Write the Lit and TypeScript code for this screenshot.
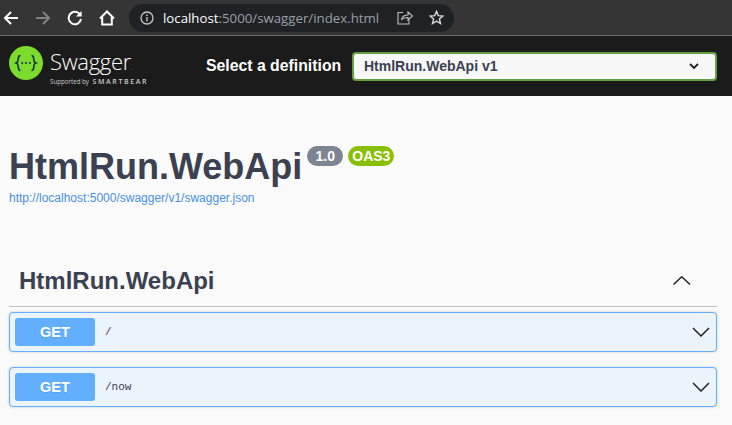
import { LitElement, html, css, svg } from "lit";
import { customElement } from "lit/decorators.js";

const chevronDown = svg`<path d="M1 1 L9 9 L17 1" fill="none" stroke="#222" stroke-width="1.5"/>`;

@customElement("app-root")
export class AppRoot extends LitElement {
  static styles = css`
    :host { display: block; width: 732px; height: 425px; overflow: hidden; background: #fafafa; font-family: "Liberation Sans", Arial, sans-serif; color: #3b4151; }
    .chrome { height: 35px; background: #353535; border-bottom: 1px solid #6b6b6b; display: flex; align-items: center; }
    .nav { display: flex; align-items: center; gap: 16px; padding-left: 3px; }
    .nav svg { display: block; }
    .omni { margin-left: 14px; width: 325px; height: 28px; border-radius: 14px; background: #202124; display: flex; align-items: center; box-sizing: border-box; padding-left: 11px; }
    .url { margin-left: 9px; font: 13.25px "Open Sans", sans-serif; color: #9aa0a6; width: 216px; white-space: nowrap; }
    .url b { font-weight: 400; color: #fff; }
    .omni .share { margin-left: 18px; }
    .omni .star { margin-left: 16px; }
    .topbar { height: 60px; background: #1b1b1b; display: flex; align-items: center; padding-left: 9px; }
    .logo { display: flex; align-items: flex-start; width: 197px; align-self: stretch; box-sizing: border-box; padding-top: 10px; }
    .logo svg { flex: none; }
    .lt { margin-left: 7px; margin-top: 2px; display: flex; flex-direction: column; }
    .sw { font: 300 22px/26px "Open Sans", sans-serif; color: #fff; letter-spacing: -0.3px; height: 30px; }
    .sw span { font-size: 5px; }
    .sub { font: 400 6.2px/8px "Open Sans", sans-serif; color: #ccc; white-space: nowrap; }
    .sub span { font-size: 7px; letter-spacing: 1.6px; font-weight: 600; margin-left: 2px; }
    .lbl { font-weight: 700; font-size: 15.8px; color: #fff; white-space: nowrap; width: 146px; }
    .sel { width: 365px; height: 29px; box-sizing: border-box; border: 2px solid #62a03f; border-radius: 4px; background: #f7f7f7; display: flex; align-items: center; justify-content: space-between; padding: 0 16px 0 10px; font-weight: 700; font-size: 14px; color: #3b4151; }
    .info { padding: 0 9px; }
    .titlewrap { margin-top: 49px; display: flex; align-items: flex-start; height: 45px; }
    h1 { margin: 0; font-size: 36px; line-height: 43px; font-weight: 700; white-space: nowrap; }
    .badge { margin-top: 1px; height: 20px; border-radius: 10px; color: #fff; font-weight: 700; font-size: 14px; line-height: 20px; text-align: center; }
    .v { background: #7d8492; width: 36px; margin-left: 5px; }
    .oas { background: #89bf04; width: 46px; margin-left: 5px; }
    a { display: block; font-size: 12px; line-height: 14px; color: #4990e2; text-decoration: none; margin-top: 1px; }
    .sec { margin: 50px 15px 0 9px; height: 52px; border-bottom: 1px solid #bfc1c5; display: flex; align-items: center; justify-content: space-between; padding: 0 26px 0 10px; box-sizing: border-box; }
    h2 { margin: 0; font-size: 24px; font-weight: 700; line-height: 52px; }
    .op { margin: 5px 15px 15px 9px; height: 40px; box-sizing: border-box; background: #ebf3fb; border: 1px solid #61affe; border-radius: 4px; display: flex; align-items: center; padding: 0 5px; box-shadow: 0 0 3px rgba(0,0,0,.19); }
    .op + .op { margin-top: 15px; }
    .m { width: 80px; height: 28px; border-radius: 3px; background: #61affe; color: #fff; font-weight: 700; font-size: 14.5px; line-height: 28px; text-align: center; flex: none; text-shadow: 0 1px 0 rgba(0,0,0,.1); }
    .p { margin-left: 10px; font: 400 11px "Liberation Mono", monospace; color: #3b4151; flex: 1; }
    .op svg { margin-right: 1px; }
  `;

  private circle() {
    return html`<svg width="34" height="34" viewBox="0 0 34 34">
      <circle cx="17" cy="17" r="17" fill="#7ddb2d"/>
      <path d="M11.5 9.5 C8.5 9.5 9.5 13 9 15 C8.8 16 8 16.6 7 17 C8 17.4 8.8 18 9 19 C9.5 21 8.5 24.5 11.5 24.5 M22.5 9.5 C25.5 9.5 24.5 13 25 15 C25.2 16 26 16.6 27 17 C26 17.4 25.2 18 25 19 C24.5 21 25.5 24.5 22.5 24.5" fill="none" stroke="#173646" stroke-width="1.6"/>
      <circle cx="13.2" cy="17" r="1" fill="#173646"/><circle cx="17" cy="17" r="1" fill="#173646"/><circle cx="20.8" cy="17" r="1" fill="#173646"/>
    </svg>`;
  }

  render() {
    return html`
      <div class="chrome">
        <div class="nav">
          <svg width="16" height="16" viewBox="0 0 16 16"><path d="M15 8 H2 M8 2 L2 8 L8 14" fill="none" stroke="#fff" stroke-width="2"/></svg>
          <svg width="16" height="16" viewBox="0 0 16 16"><path d="M1 8 H14 M8 2 L14 8 L8 14" fill="none" stroke="#828282" stroke-width="2"/></svg>
          <svg width="16" height="16" viewBox="0 0 16 16"><path d="M13.3 5 A6.2 6.2 0 1 0 14 9" fill="none" stroke="#fff" stroke-width="2"/><path d="M14.6 1 V6.6 H9 Z" fill="#fff"/></svg>
          <svg width="16" height="16" viewBox="0 0 16 16"><path d="M1 8.5 L8 1.5 L15 8.5 M3.2 7 V14.5 H12.8 V7" fill="none" stroke="#fff" stroke-width="2"/></svg>
        </div>
        <div class="omni">
          <svg width="14" height="14" viewBox="0 0 14 14"><circle cx="7" cy="7" r="6" fill="none" stroke="#c4c7c5" stroke-width="1.3"/><path d="M7 6 V10.5 M7 3.4 V5" stroke="#c4c7c5" stroke-width="1.4"/></svg>
          <div class="url"><b>localhost</b>:5000/swagger/index.html</div>
          <svg class="share" width="16" height="15" viewBox="0 0 16 15"><path d="M6 2.5 H1 V14 H12 V10 M4.5 10 C5 6.5 7.5 5 11 5 V2 L15.5 6 L11 10 V7.5 C8 7.5 6 8 4.5 10 Z" fill="none" stroke="#bdc1c6" stroke-width="1.1"/></svg>
          <svg class="star" width="15" height="15" viewBox="0 0 15 15"><path d="M7.5 1.4 L9.3 5.6 L13.9 6 L10.4 9 L11.5 13.5 L7.5 11.1 L3.5 13.5 L4.6 9 L1.1 6 L5.7 5.6 Z" fill="none" stroke="#d5d8db" stroke-width="1.4"/></svg>
        </div>
      </div>
      <div class="topbar">
        <div class="logo">
          ${this.circle()}
          <div class="lt">
            <div class="sw">Swagger<span>.</span></div>
            <div class="sub">Supported by <span>SMARTBEAR</span></div>
          </div>
        </div>
        <div class="lbl">Select a definition</div>
        <div class="sel">HtmlRun.WebApi v1
          <svg width="10" height="7" viewBox="0 0 10 7"><path d="M1 1 L5 5 L9 1" fill="none" stroke="#222" stroke-width="1.8"/></svg>
        </div>
      </div>
      <div class="info">
        <div class="titlewrap">
          <h1>HtmlRun.WebApi</h1>
          <div class="badge v">1.0</div>
          <div class="badge oas">OAS3</div>
        </div>
        <a>http://localhost:5000/swagger/v1/swagger.json</a>
      </div>
      <div class="sec">
        <h2>HtmlRun.WebApi</h2>
        <svg width="18" height="10" viewBox="0 0 18 10"><path d="M0.5 8.5 L8.7 0.8 L17 8.5" fill="none" stroke="#222" stroke-width="1.5"/></svg>
      </div>
      <div class="op"><div class="m">GET</div><div class="p">/</div>
        <svg width="18" height="10" viewBox="0 0 18 10">${chevronDown}</svg></div>
      <div class="op"><div class="m">GET</div><div class="p">/now</div>
        <svg width="18" height="10" viewBox="0 0 18 10">${chevronDown}</svg></div>
    `;
  }
}
